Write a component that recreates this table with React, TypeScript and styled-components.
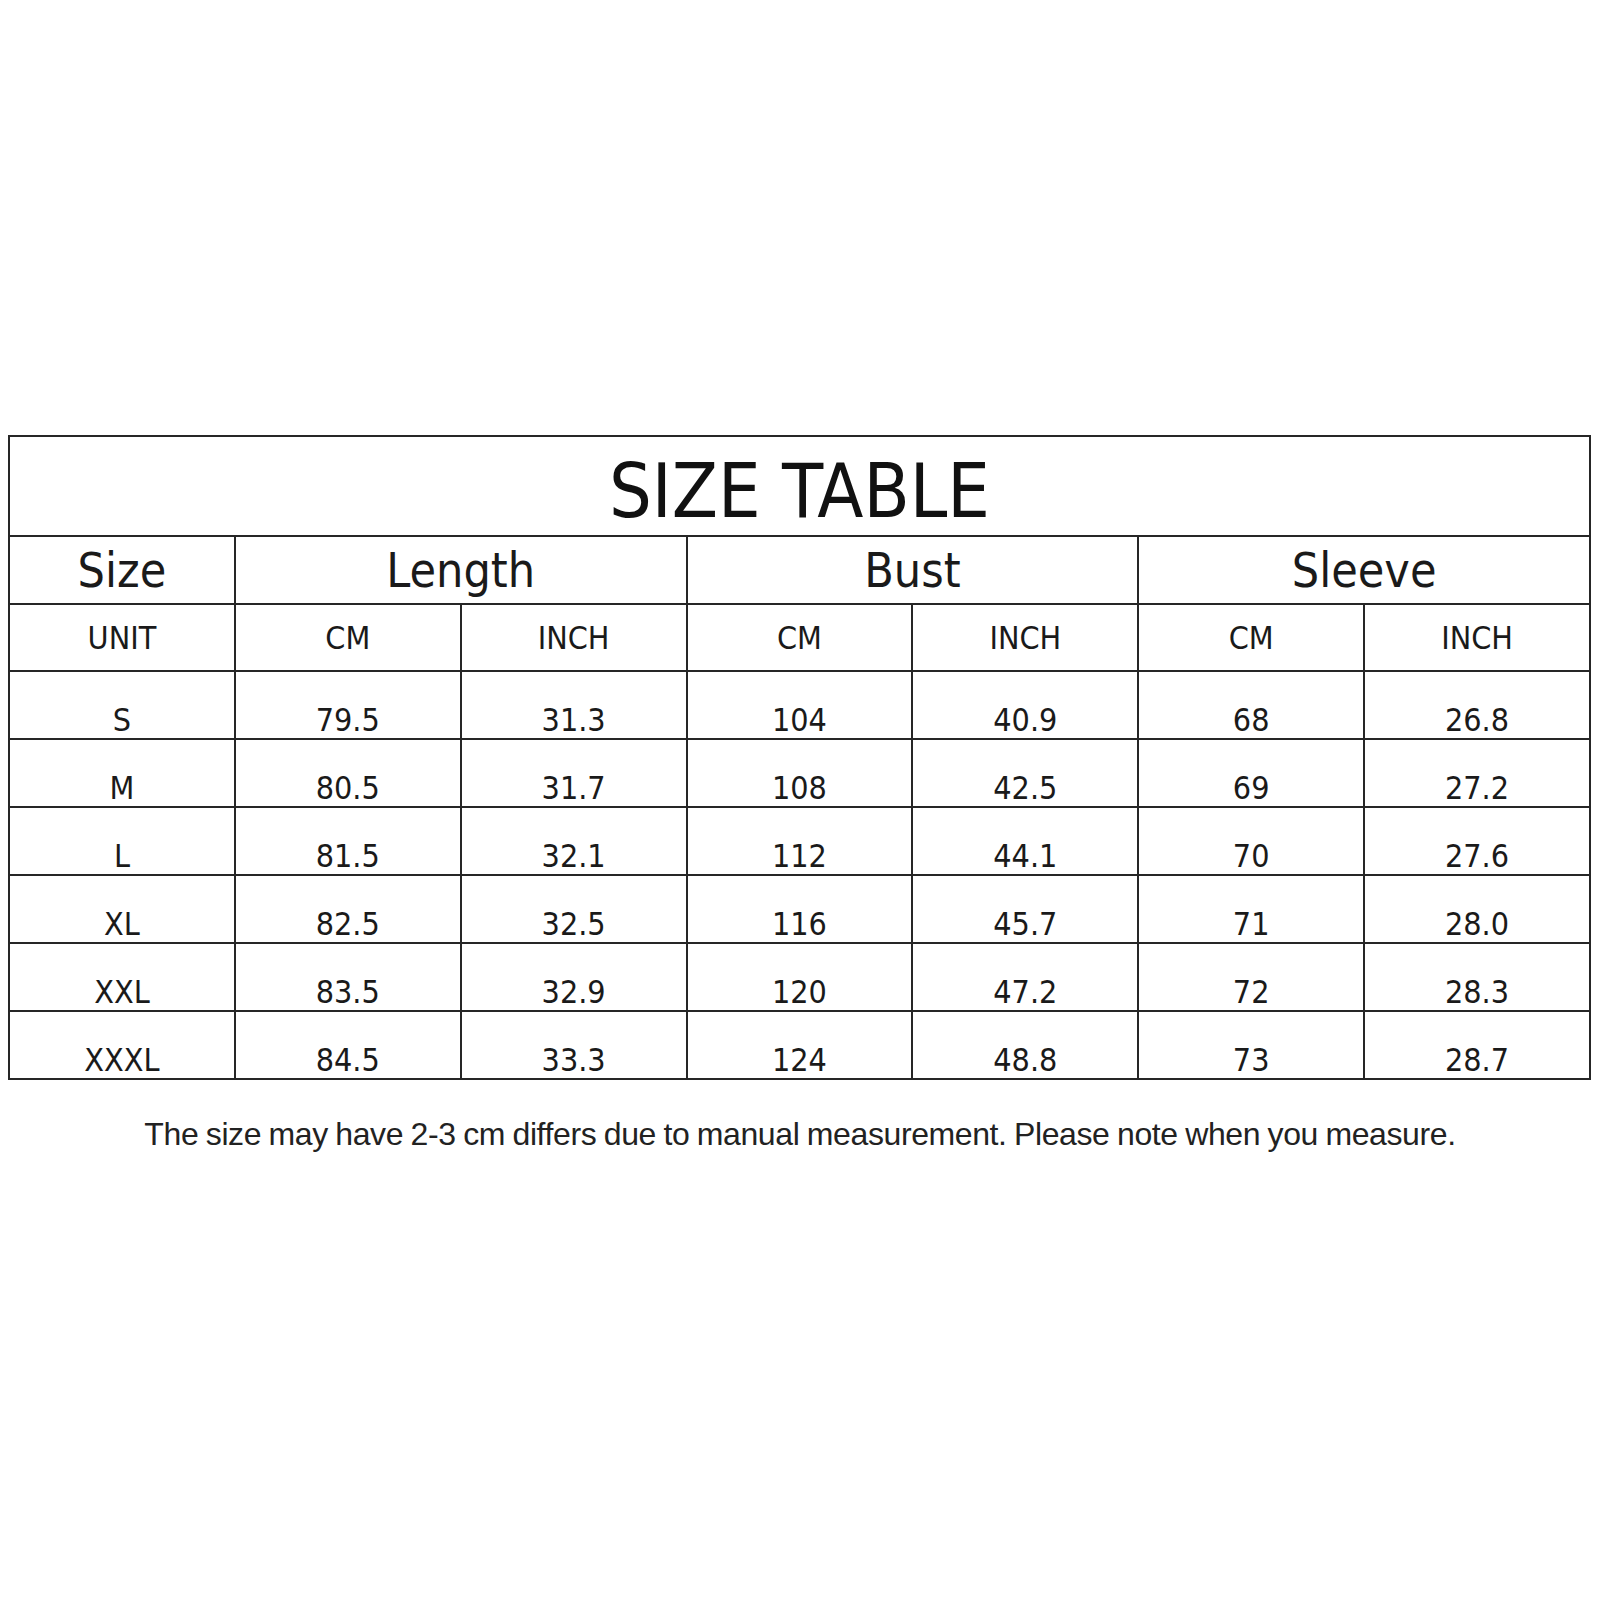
import { FC } from 'react'
import styled, { createGlobalStyle } from 'styled-components'

const GlobalStyle = createGlobalStyle`
  html, body {
    margin: 0;
    padding: 0;
    background: #fff;
  }
`

const Page = styled.div`
  width: 1600px;
  height: 1600px;
  padding-top: 435px;
  box-sizing: border-box;
  font-family: 'DejaVu Sans Condensed', 'DejaVu Sans', sans-serif;
  font-stretch: condensed;
  color: #1a1a1a;
`

const Table = styled.table`
  width: 1583px;
  margin-left: 8px;
  border-collapse: collapse;
  table-layout: fixed;
`

const Cell = styled.td<{ $size: number; $bottom?: boolean }>`
  border: 2px solid #262626;
  padding: 0;
  text-align: center;
  font-size: ${(p) => p.$size}px;
  line-height: 1;
  vertical-align: ${(p) => (p.$bottom ? 'bottom' : 'middle')};
  padding-bottom: ${(p) => (p.$bottom ? '2px' : '0')};
`

const TitleCell = styled(Cell)`
  padding-top: 10px;
  color: #111;
`

const Row = styled.tr<{ $h: number }>`
  height: ${(p) => p.$h}px;
`

const Note = styled.p`
  margin: 38px 0 0;
  text-align: center;
  font-family: 'Liberation Sans', Arial, sans-serif;
  font-stretch: normal;
  font-size: 32px;
  line-height: 1;
  letter-spacing: -0.4px;
  word-spacing: -1px;
  color: #222;
`

const rows: string[][] = [
  ['S', '79.5', '31.3', '104', '40.9', '68', '26.8'],
  ['M', '80.5', '31.7', '108', '42.5', '69', '27.2'],
  ['L', '81.5', '32.1', '112', '44.1', '70', '27.6'],
  ['XL', '82.5', '32.5', '116', '45.7', '71', '28.0'],
  ['XXL', '83.5', '32.9', '120', '47.2', '72', '28.3'],
  ['XXXL', '84.5', '33.3', '124', '48.8', '73', '28.7'],
]

const units = ['UNIT', 'CM', 'INCH', 'CM', 'INCH', 'CM', 'INCH']

const App: FC = () => {
  return (
    <Page>
      <GlobalStyle />
      <Table>
        <tbody>
          <Row $h={100}>
            <TitleCell colSpan={7} $size={75}>
              SIZE TABLE
            </TitleCell>
          </Row>
          <Row $h={68}>
            <Cell $size={48}>Size</Cell>
            <Cell colSpan={2} $size={48}>
              Length
            </Cell>
            <Cell colSpan={2} $size={48}>
              Bust
            </Cell>
            <Cell colSpan={2} $size={48}>
              Sleeve
            </Cell>
          </Row>
          <Row $h={67}>
            {units.map((u, i) => (
              <Cell key={i} $size={32}>
                {u}
              </Cell>
            ))}
          </Row>
          {rows.map((r) => (
            <Row key={r[0]} $h={68}>
              {r.map((v, i) => (
                <Cell key={i} $size={32} $bottom>
                  {v}
                </Cell>
              ))}
            </Row>
          ))}
        </tbody>
      </Table>
      <Note>
        The size may have 2-3 cm differs due to manual measurement. Please note when you measure.
      </Note>
    </Page>
  )
}

export default App
